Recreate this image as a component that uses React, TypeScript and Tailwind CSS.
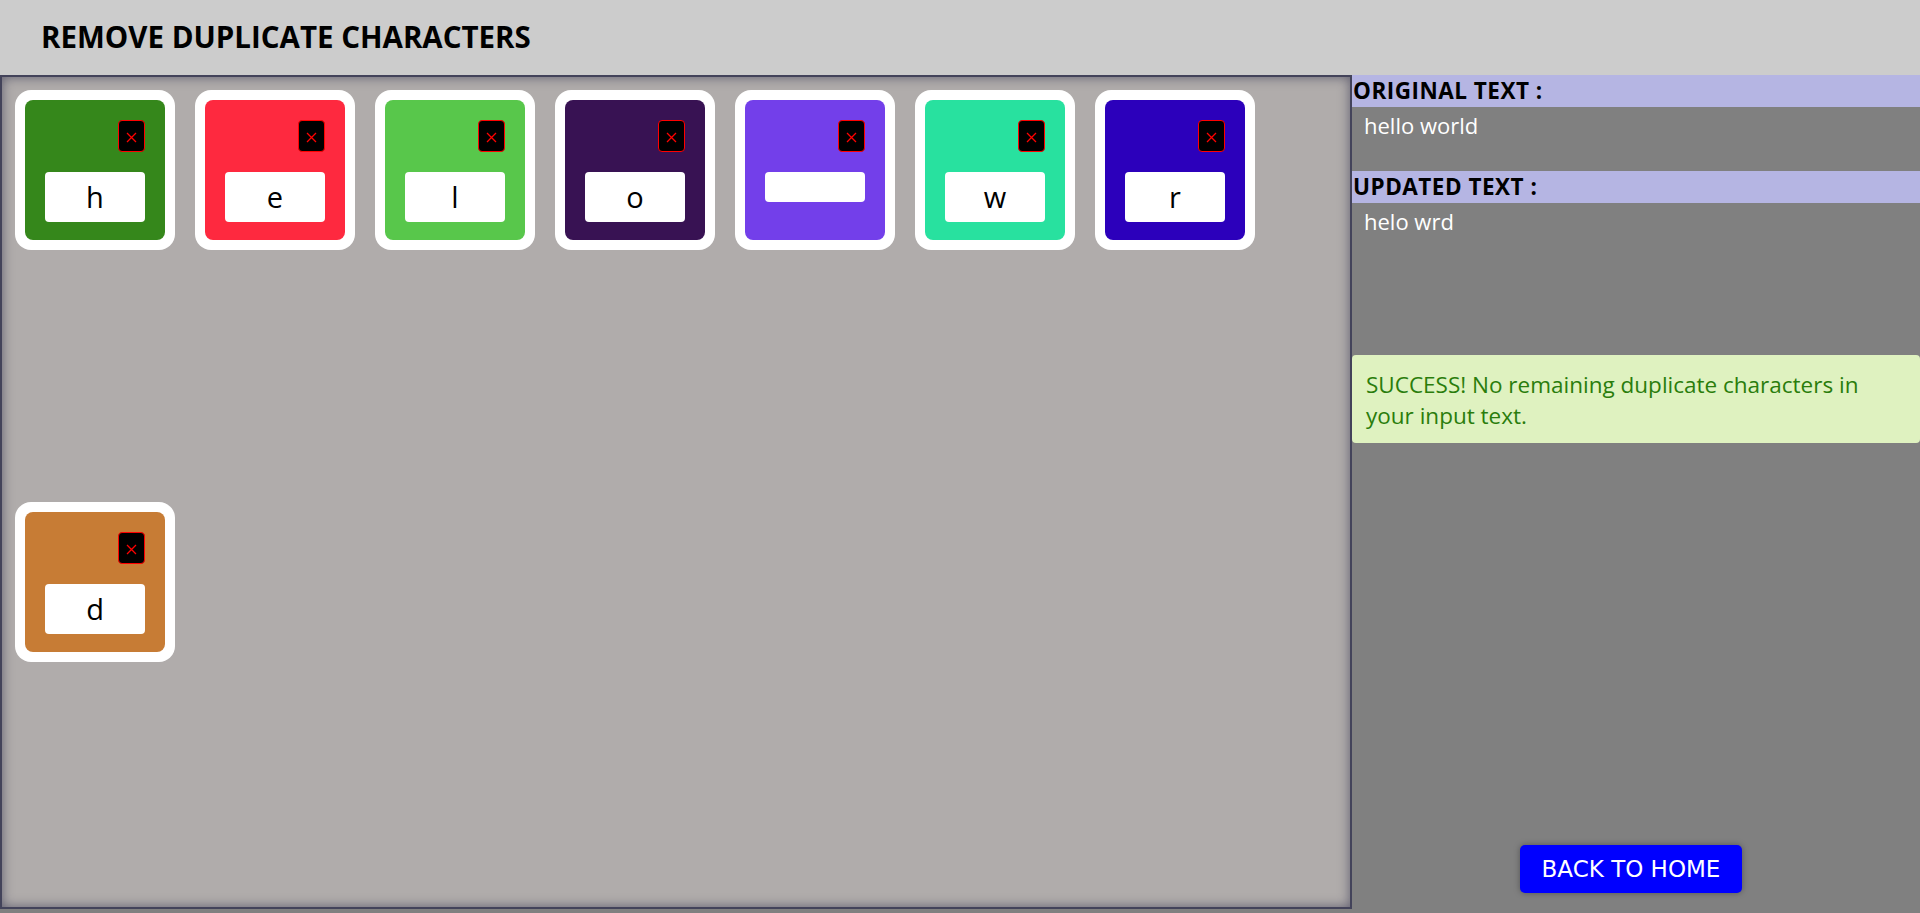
import React from 'react'

const letters = [
    { ch: 'h', color: 'bg-[#35871b]' },
    { ch: 'e', color: 'bg-[#fe293f]' },
    { ch: 'l', color: 'bg-[#58c74b]' },
    { ch: 'o', color: 'bg-[#381253]' },
    { ch: ' ', color: 'bg-[#733fea]' },
    { ch: 'w', color: 'bg-[#28e19f]' },
    { ch: 'r', color: 'bg-[#2c00bb]' },
    { ch: 'd', color: 'bg-[#c77c35]' },
]

const CharCard = ({ ch, color }: { ch: string, color: string }) => {
    return (
        <div className="m-[10px] w-[160px] h-[160px] rounded-[16px] bg-white p-[10px]">
            <div className={`h-full rounded-[8px] ${color} flex flex-col items-center pt-[20px] px-[20px]`}>
                {/* remove button */}
                <button className="self-end w-[27px] h-[32px] rounded-[4px] bg-black border border-[#ff0000] flex items-center justify-center">
                    <svg width="11" height="11" viewBox="0 0 11 11" className="mt-[2px]">
                        <path d="M1 1L10 10M10 1L1 10" stroke="#ff0000" strokeWidth="1.3" />
                    </svg>
                </button>
                {/* character box */}
                <div className="mt-[20px] w-[100px] rounded-[4px] bg-white py-[15px] text-center text-[29px] leading-[20px] text-black">
                    {ch.trim()}
                </div>
            </div>
        </div>
    )
}

const App = () => {
    return (
        <div className="h-[913px] w-full flex flex-col overflow-hidden font-['Open_Sans',sans-serif]">
            {/* Header */}
            <header className="h-[75px] shrink-0 bg-[#cccccc] flex items-center pl-[41px]">
                <h1 className="text-[29.5px] font-bold text-black">REMOVE DUPLICATE CHARACTERS</h1>
            </header>

            <div className="flex flex-1 bg-[#808080]">
                {/* Character cards */}
                <div className="w-[1352px] h-[834px] shrink-0 border-2 border-[#43435a] bg-[#b0acab] shadow-[inset_0_0_12px_rgba(40,40,70,0.6)] p-[3px] flex flex-wrap items-start">
                    {letters.map((l, i) => (
                        <CharCard key={i} ch={l.ch} color={l.color} />
                    ))}
                </div>

                {/* Result panel */}
                <div className="flex-1 flex flex-col bg-[#808080]">
                    <div className="h-[32px] bg-[#b5b5e3] pl-[1px] text-[22.5px] font-bold leading-[32px] text-black tracking-[0.5px]">ORIGINAL TEXT :</div>
                    <div className="h-[64px] pl-[12px] pt-[2px] text-[22px] text-white">hello world</div>

                    <div className="h-[32px] bg-[#b5b5e3] pl-[1px] text-[22.5px] font-bold leading-[32px] text-black tracking-[0.5px]">UPDATED TEXT :</div>
                    <div className="h-[64px] pl-[12px] pt-[2px] text-[22px] text-white">helo wrd</div>

                    <div className="mt-[88px] rounded-[4px] bg-[#dff2c0] pl-[14px] pr-[20px] pt-[14px] pb-[12px] text-[22.5px] leading-[31px] text-[#2a7d0c]">
                        SUCCESS! No remaining duplicate characters in your input text.
                    </div>

                    <div className="mt-auto mb-[20px] flex justify-center pr-[10px]">
                        <button className="w-[222px] h-[48px] rounded-[5px] bg-[#0000ff] text-white text-[23px] font-['DejaVu_Sans',sans-serif] shadow-[0_0_6px_rgba(0,0,0,0.35)]">
                            BACK TO HOME
                        </button>
                    </div>
                </div>
            </div>
        </div>
    )
}

export default App
